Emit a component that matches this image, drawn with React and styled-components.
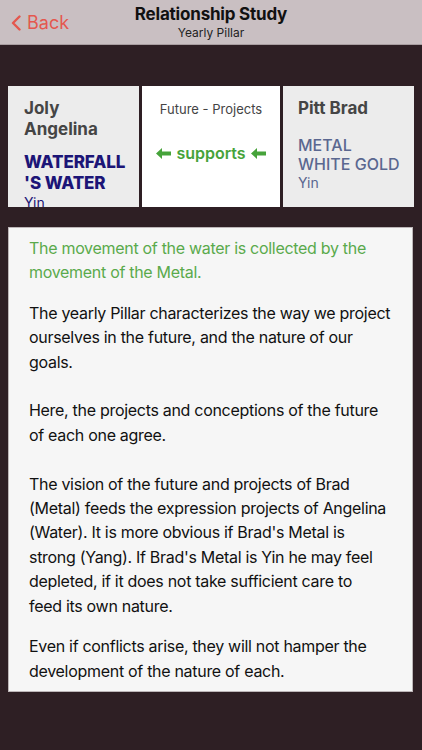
import React from "react";
import styled, { createGlobalStyle } from "styled-components";

const Global = createGlobalStyle`
  html, body { margin: 0; padding: 0; background: #2e1f24; }
  body { font-family: Inter, "Noto Sans", sans-serif; -webkit-font-smoothing: antialiased; }
  #root { min-height: 750px; }
`;

const Page = styled.div`
  width: 422px;
  min-height: 750px;
  background: #2e1f24;
  display: flex;
  flex-direction: column;
`;

const NavBar = styled.header`
  height: 44px;
  background: #c9bfc2;
  border-bottom: 1px solid #a89da0;
  display: grid;
  grid-template-columns: 100px 1fr 100px;
  align-items: center;
`;

const BackButton = styled.div`
  display: flex;
  align-items: center;
  gap: 6px;
  padding-left: 11px;
  color: #e4574e;
  font-size: 18px;
  padding-top: 1px;
`;

const TitleBlock = styled.div`
  display: flex;
  flex-direction: column;
  align-items: center;
  line-height: 1.1;
`;

const Title = styled.div`
  font-size: 17px;
  font-weight: 700;
  color: #111;
  letter-spacing: -0.2px;
`;

const Subtitle = styled.div`
  font-size: 12px;
  color: #222;
  margin-top: 2px;
`;

const Content = styled.main`
  padding: 41px 9px 0 8px;
  display: flex;
  flex-direction: column;
  gap: 20px;
`;

const Cards = styled.div`
  display: grid;
  grid-template-columns: 131px 138px 131px;
  gap: 3px;
  height: 121px;
`;

const Card = styled.div`
  background: ${(p) => (p.$center ? "#ffffff" : "#ececec")};
  overflow: hidden;
  padding: ${(p) => p.$pad || "12px 0 0 16px"};
  display: flex;
  flex-direction: column;
  align-items: ${(p) => (p.$center ? "center" : "flex-start")};
`;

const Name = styled.div`
  font-size: 17px;
  font-weight: 700;
  color: #454545;
  line-height: 21px;
`;

const Element = styled.div`
  margin-top: ${(p) => p.$mt || "12px"};
  font-size: ${(p) => p.$size || "17px"};
  font-weight: ${(p) => (p.$bold ? 800 : 500)};
  color: ${(p) => p.$color};
  line-height: ${(p) => p.$lh || "21px"};
  letter-spacing: ${(p) => (p.$bold ? "-0.1px" : "0")};
`;

const Polarity = styled.div`
  font-size: 14px;
  color: ${(p) => p.$color};
  line-height: 17px;
`;

const Relation = styled.div`
  font-size: 13px;
  color: #444;
  margin-top: 3px;
`;

const Supports = styled.div`
  margin-top: 26px;
  font-size: 16px;
  font-weight: 600;
  color: #46a33a;
  display: flex;
  align-items: center;
  gap: 5px;
`;

const Arrow = () => (
  <svg width="15" height="11" viewBox="0 0 15 11">
    <path d="M0 5.5 L6 0 L6 3.5 L15 3.5 L15 7.5 L6 7.5 L6 11 Z" fill="#46a33a" />
  </svg>
);

const Panel = styled.section`
  background: #f6f6f6;
  border: 1px solid #bdb6b8;
  padding: 8px 20px 8px 20px;
  font-size: 16px;
  line-height: 24.4px;
  letter-spacing: -0.3px;
  color: #111;
`;

const Para = styled.p`
  margin: 0 0 ${(p) => (p.$last ? "0" : "16px")} 0;
  color: ${(p) => p.$color || "#111"};
  white-space: pre-line;
`;

export default function App() {
  return (
    <Page>
      <Global />
      <NavBar>
        <BackButton>
          <svg width="10" height="16" viewBox="0 0 10 16">
            <path d="M8.5 1.5 L2 8 L8.5 14.5" fill="none" stroke="#e4574e" strokeWidth="2.4" strokeLinecap="round" strokeLinejoin="round" />
          </svg>
          <span>Back</span>
        </BackButton>
        <TitleBlock>
          <Title>Relationship Study</Title>
          <Subtitle>Yearly Pillar</Subtitle>
        </TitleBlock>
        <div />
      </NavBar>
      <Content>
        <Cards>
          <Card>
            <Name>Joly<br />Angelina</Name>
            <Element $bold $color="#1c1577">WATERFALL<br />'S WATER</Element>
            <Polarity $color="#1c1577">Yin</Polarity>
          </Card>
          <Card $center $pad="12px 0 0 0">
            <Relation>Future - Projects</Relation>
            <Supports><Arrow />supports<Arrow /></Supports>
          </Card>
          <Card $pad="12px 0 0 15px">
            <Name>Pitt Brad</Name>
            <Element $color="#5a6790" $mt="17px" $lh="19px" $size="16px">METAL<br />WHITE GOLD</Element>
            <Polarity $color="#5a6790">Yin</Polarity>
          </Card>
        </Cards>
        <Panel>
          <Para $color="#5aaa4c">The movement of the water is collected by the movement of the Metal.</Para>
          <Para>{"The yearly Pillar characterizes the way we project ourselves in the future, and the nature of our goals.\n\nHere, the projects and conceptions of the future of each one agree.\n\nThe vision of the future and projects of Brad (Metal) feeds the expression projects of Angelina (Water). It is more obvious if Brad's Metal is strong (Yang). If Brad's Metal is Yin he may feel depleted, if it does not take sufficient care to\nfeed its own nature."}</Para>
          <Para $last>Even if conflicts arise, they will not hamper the development of the nature of each.</Para>
        </Panel>
      </Content>
    </Page>
  );
}
